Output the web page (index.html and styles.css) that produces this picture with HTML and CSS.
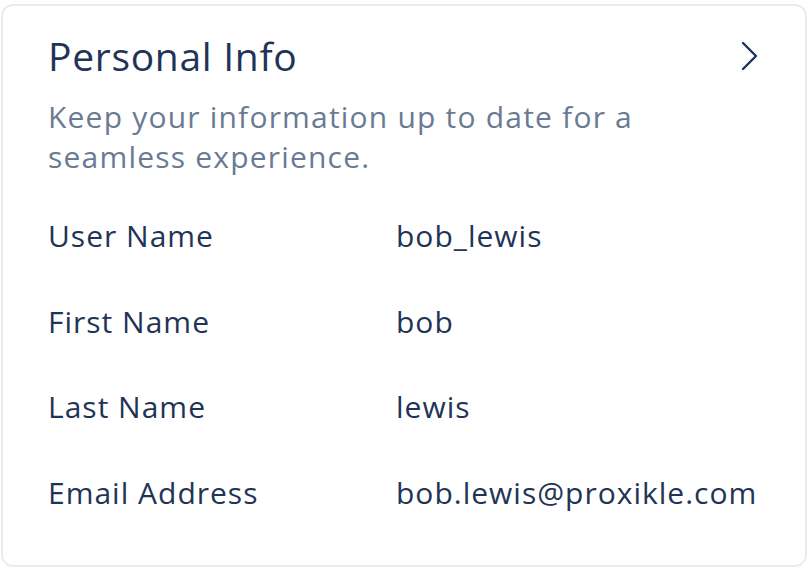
FILE: index.html
```html
<!DOCTYPE html>
<html>
  <head>
    <meta charset="UTF-8" />
    <title>Personal Info</title>
    <link rel="stylesheet" href="styles.css">
  </head>
  <body>
    <div class="card">
      <div class="card-head">
        <h2 class="card-title">Personal Info</h2>
        <!-- chevron -->
        <svg class="chevron" width="20" height="32" viewBox="0 0 20 32">
          <path d="M3 3 L16 16 L3 29" fill="none" stroke="#1f3456" stroke-width="2.4" stroke-linecap="round" stroke-linejoin="round" />
        </svg>
      </div>
      <p class="card-desc">Keep your information up to date for a seamless experience.</p>

      <div class="info">
        <div class="info-label">User Name</div>
        <div class="info-value">bob_lewis</div>

        <div class="info-label">First Name</div>
        <div class="info-value">bob</div>

        <div class="info-label">Last Name</div>
        <div class="info-value">lewis</div>

        <div class="info-label">Email Address</div>
        <div class="info-value">bob.lewis@proxikle.com</div>
      </div>
    </div>
  </body>
</html>
```

FILE: styles.css
```css
body {
  margin: 0;
  padding: 4px 1px 1px 1px;
  background: #ffffff;
  font-family: "Open Sans", "Liberation Sans", sans-serif;
  color: #1f3456;
}

.card {
  height: 563px;
  box-sizing: border-box;
  border: 2px solid #ececec;
  border-radius: 12px;
  padding: 26px 45px 0 45px;
}

.card-head {
  display: flex;
  align-items: center;
  justify-content: space-between;
}

.card-title {
  margin: 0;
  font-size: 39px;
  font-weight: 400;
  line-height: 48px;
  letter-spacing: 0.7px;
  color: #1f3456;
}

.card-desc {
  margin: 17px 0 0 0;
  width: 640px;
  font-size: 30px;
  line-height: 40px;
  letter-spacing: 1.2px;
  color: #6b7a93;
}

.info {
  display: grid;
  grid-template-columns: 348px 1fr;
  row-gap: 51.6px;
  margin-top: 42px;
  font-size: 30px;
  line-height: 34px;
  letter-spacing: 1px;
}
```
